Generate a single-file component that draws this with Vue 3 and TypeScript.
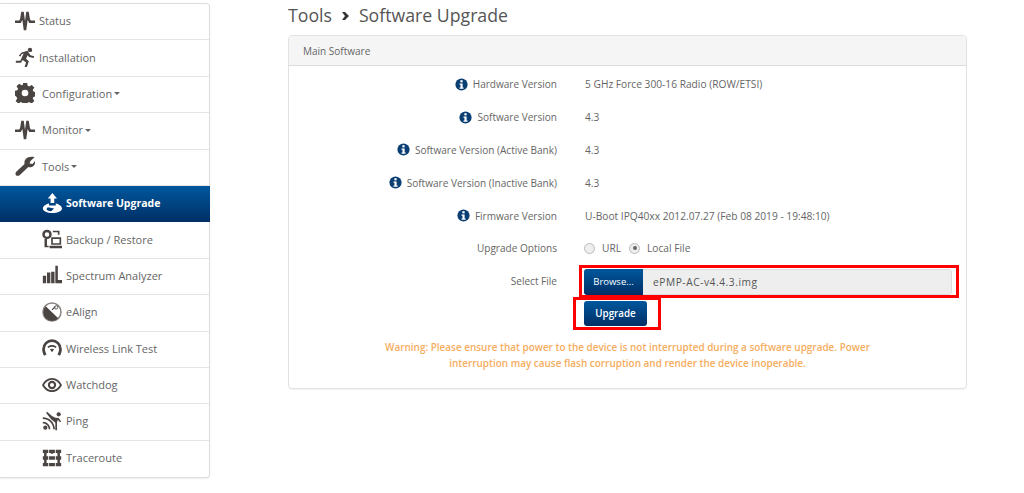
<script setup lang="ts">
interface NavItem { label: string; icon: string; caret?: boolean; sub?: boolean; active?: boolean; wide?: boolean }
const nav: NavItem[] = [
  { label: 'Status', icon: 'pulse' },
  { label: 'Installation', icon: 'run' },
  { label: 'Configuration', icon: 'gear', caret: true, wide: true },
  { label: 'Monitor', icon: 'pulse', caret: true, wide: true },
  { label: 'Tools', icon: 'wrench', caret: true, wide: true },
  { label: 'Software Upgrade', icon: 'upgrade', sub: true, active: true },
  { label: 'Backup / Restore', icon: 'backup', sub: true },
  { label: 'Spectrum Analyzer', icon: 'bars', sub: true },
  { label: 'eAlign', icon: 'dish', sub: true },
  { label: 'Wireless Link Test', icon: 'gauge', sub: true },
  { label: 'Watchdog', icon: 'eye', sub: true },
  { label: 'Ping', icon: 'ping', sub: true },
  { label: 'Traceroute', icon: 'trace', sub: true },
]
const rows = [
  { label: 'Hardware Version', value: '5 GHz Force 300-16 Radio (ROW/ETSI)' },
  { label: 'Software Version', value: '4.3' },
  { label: 'Software Version (Active Bank)', value: '4.3' },
  { label: 'Software Version (Inactive Bank)', value: '4.3' },
  { label: 'Firmware Version', value: 'U-Boot IPQ40xx 2012.07.27 (Feb 08 2019 - 19:48:10)' },
]
</script>

<template>
  <div class="page">
    <nav class="side">
      <a v-for="item in nav" :key="item.label" class="item" :class="{ sub: item.sub, active: item.active, wide: item.wide }">
        <svg class="ico" viewBox="0 0 24 24" aria-hidden="true">
          <path v-if="item.icon === 'pulse'" fill="none" stroke="#4a4442" stroke-width="3" d="M0 13h6l1.500-3 1.500-9 3 22 3-22 1.500 9 1.500 3h6" />
          <g v-else-if="item.icon === 'run'">
            <circle cx="18" cy="3.500" r="2.600" />
            <path d="M8 6.500l7-2 3.500 5.500 4.500 1-.6 2.300-5.600-1.300-1.600-2-2 4.200 3.400 3-2.700 8-2.500-.9 1.900-5.600-4.100-3-2 3.300H1v-2.400h5.400l4-8.800-2.200.6-1.700 3-2-1z" />
          </g>
          <path v-else-if="item.icon === 'gear'" fill-rule="evenodd" d="M9.500 0h5l.7 3.400 1.800.8 3-1.900 3.200 3.200-1.900 3 .8 1.800 3.400.7v5l-3.400.7-.8 1.800 1.900 3-3.200 3.200-3-1.900-1.800.8-.7 3.400h-5l-.7-3.400-1.800-.8-3 1.900-3.200-3.200 1.900-3-.8-1.800L-.5 14.500v-5l3.400-.7.8-1.800-1.900-3 3.200-3.200 3 1.900 1.800-.8zM12 8a4 4 0 1 0 0 8 4 4 0 0 0 0-8z" />
          <path v-else-if="item.icon === 'wrench'" d="M23.500 1.500l-5 4.500-1 3 3.500.5 3-3.500c.6 3-.8 6-4 7.300-1.500.5-3 .4-4-.2L5.500 23c-1.500 1.300-3.700 1-4.500-.3-.8-1.300-.4-3 .8-4l9.700-9.200c-.5-2-.2-4.200 1.500-6C14.800 1.300 20 .3 23.500 1.500z" />
          <g v-else-if="item.icon === 'upgrade'">
            <path d="M12.500 0l5.500 6.500h-3.300V12h-4.400V6.500H7z" />
            <path fill-rule="evenodd" d="M8.500 12.500C4 13.500 1 16 1 18.500c0 3 5 5.500 11.500 5.500S24 21.500 24 18.500c0-2.500-3-5-7.500-6V15h-8zM7 17l7.500 1.500L11 22c-3.500-.2-5.500-1.500-5.500-3z" />
          </g>
          <g v-else-if="item.icon === 'backup'">
            <circle cx="6" cy="6.500" r="4.200" fill="none" stroke="#4a4442" stroke-width="3" />
            <path d="M13 2h8v5h-2V4h-6zM3 12h3v8h2v2H3z" />
            <path fill-rule="evenodd" d="M11 10h12v9H11zM13 12v5h8v-5zM9 20h15v3H9z" />
          </g>
          <path v-else-if="item.icon === 'bars'" d="M1 13h4v9H1zM6 9h4v13H6zM11 8h4v14h-4zM16 1h3v17h5v4h-8z" />
          <g v-else-if="item.icon === 'dish'">
            <circle cx="12" cy="12" r="10.800" fill="none" stroke="#8a8482" stroke-width="1.800" />
            <path d="M4.500 5l15 14.500A10 10 0 0 1 4.500 5zM11.500 9l4-4 1 1-4 4z" />
            <circle cx="17" cy="6.500" r="2" fill="none" stroke="#4a4442" />
          </g>
          <g v-else-if="item.icon === 'gauge'">
            <path d="M12 1.500a11.800 11.800 0 0 1 11.800 11.800c0 2.700-.6 5.400-2.200 8l-3-1.500c1.100-2.200 1.900-4.300 1.900-6.500a8.500 8.500 0 0 0-17 0c0 2.200.8 4.300 1.900 6.500l-3 1.500C.8 18.700.2 16 .2 13.300A11.800 11.800 0 0 1 12 1.500z" />
            <path d="M6.500 10.500c3-2.800 8-2.800 11 0l-1.300 1.400c-2.300-2-6-2-8.300 0zM9.500 13.500c1.500-1 3.500-1 5 0L12 17z" />
          </g>
          <g v-else-if="item.icon === 'eye'">
            <path fill-rule="evenodd" d="M12 3.500c5.500 0 9.700 3.700 12 8.500-2.300 4.800-6.500 8.500-12 8.500S2.300 16.800 0 12c2.300-4.800 6.500-8.500 12-8.500zm0 2.200C8 5.700 4.500 8.400 2.500 12c2 3.600 5.500 6.300 9.500 6.300s7.500-2.700 9.500-6.300C19.500 8.400 16 5.700 12 5.700z" />
            <path fill-rule="evenodd" d="M12 7a5 5 0 1 1 0 10 5 5 0 0 1 0-10zm0 2.500a2.500 2.500 0 1 0 0 5 2.500 2.500 0 0 0 0-5z" />
          </g>
          <g v-else-if="item.icon === 'ping'">
            <circle cx="4" cy="20" r="2.500" />
            <path d="M1 13c5 0 9 4 9 9H8c0-4-3-7-7-7zM1 7.500c8 0 14.500 6.500 14.500 14.500h-2C13.500 15 8 9.500 1 9.500z" />
            <circle cx="20" cy="4" r="2.500" />
            <path d="M6 1l6 5 4 2 4 .5 3 4-1.500 1-2.500-3-1 3v9.500h-2V14l-5-4-6-7.500z" />
          </g>
          <path v-else d="M1 2h6.500v4H1zM8.500 2h7v4h-7zM16.500 2H23v4h-6.500zM1 10h6.500v4H1zM8.500 10h7v4h-7zM16.500 10H23v4h-6.500zM1 18h6.500v4H1zM8.500 18h7v4h-7zM16.500 18H23v4h-6.500zM2.500 5h3v14h-3zM18.500 5h3v14h-3zM10.500 5h3v2h-3z" />
        </svg>
        <span class="lbl">{{ item.label }}</span>
        <span v-if="item.caret" class="caret"></span>
      </a>
    </nav>

    <main class="main">
      <h1 class="crumb">
        <span>Tools</span>
        <svg class="chev" viewBox="0 0 10 10" aria-hidden="true"><path d="M2 1h3l4 4-4 4H2l3-4z" /></svg>
        <span>Software Upgrade</span>
      </h1>
      <section class="panel">
        <header class="head">Main Software</header>
        <div class="body">
          <div v-for="r in rows" :key="r.label" class="row">
            <div class="key">
              <svg class="info" viewBox="0 0 16 16" aria-hidden="true">
                <circle cx="8" cy="8" r="6.500" fill="#0a3f73" />
                <rect x="6.800" y="3.400" width="2.400" height="2.300" fill="#fff" />
                <path d="M5.900 6.800h3.300v4.300h1v1.400H5.900v-1.400h1V8.200h-1z" fill="#fff" />
              </svg>
              <span>{{ r.label }}</span>
            </div>
            <div class="val">{{ r.value }}</div>
          </div>
          <div class="row">
            <div class="key">Upgrade Options</div>
            <div class="val radios">
              <span class="radio"></span><span class="rl">URL</span>
              <span class="radio on"></span><span>Local File</span>
            </div>
          </div>
          <div class="row">
            <div class="key">Select File</div>
            <div class="val file">
              <span class="btn browse">Browse...</span>
              <span class="fname">ePMP-AC-v4.4.3.img</span>
              <span class="mark mark-file"></span>
            </div>
          </div>
          <div class="row up">
            <div class="key"></div>
            <div class="val upcell">
              <span class="btn upgrade">Upgrade</span>
              <span class="mark mark-up"></span>
            </div>
          </div>
          <p class="warn">Warning: Please ensure that power to the device is not interrupted during a software upgrade. Power interruption may cause flash corruption and render the device inoperable.</p>
        </div>
      </section>
    </main>
  </div>
</template>

<style>
html, body { margin: 0; background: #fff; }
</style>

<style scoped>
.page {
  width: 1024px;
  height: 493px;
  overflow: hidden;
  display: flex;
  align-items: flex-start;
  font-family: "Open Sans", sans-serif;
  color: #5f5f5f;
}
.side {
  flex: none;
  width: 210px;
  margin: 3px 78px 0 0;
  box-sizing: border-box;
  border: 1px solid #ddd;
  border-left: 0;
  border-radius: 0 4px 4px 0;
  box-shadow: 0 1px 2px rgba(0, 0, 0, .08);
  display: grid;
  grid-auto-rows: 36.400px;
}
.item {
  display: flex;
  align-items: center;
  box-sizing: border-box;
  padding: 0 0 2px 15px;
  border-bottom: 1px solid #e4e4e4;
  font-size: 11px;
  color: #666;
}
.item:last-child { border-bottom: 0; }
.item .ico { flex: none; width: 20px; height: 20px; margin-right: 4px; fill: #4a4442; }
.item.wide .ico { margin-right: 7px; }
.item.sub { padding-left: 42px; }
.item.active {
  background: linear-gradient(#00579d, #002f66);
  color: #fff;
  font-weight: 700;
  font-size: 10.500px;
  border-bottom: 0;
  margin-right: -1px;
}
.item.active .ico { fill: #fff; }
.caret {
  margin: 1px 0 0 2px;
  border-top: 3px solid #666;
  border-left: 3px solid transparent;
  border-right: 3px solid transparent;
}
.main { flex: none; width: 679px; }
.crumb {
  display: flex;
  align-items: center;
  box-sizing: border-box;
  height: 35px;
  padding-bottom: 5px;
  margin: 0;
  font-size: 17.700px;
  font-weight: 400;
  color: #555;
}
.chev { width: 10px; height: 10px; margin: 2px 9px 0 8px; fill: #333; }
.panel {
  box-sizing: border-box;
  height: 354px;
  border: 1px solid #e2e2e2;
  border-radius: 4px;
  box-shadow: 0 1px 1px rgba(0, 0, 0, .05);
}
.head {
  height: 29px;
  padding: 0 14px;
  display: flex;
  align-items: center;
  background: #f5f5f5;
  border-bottom: 1px solid #ddd;
  border-radius: 3px 3px 0 0;
  font-size: 10px;
  color: #666;
}
.body { padding-top: 2px; }
.row {
  display: flex;
  align-items: center;
  height: 32.800px;
  font-size: 10.200px;
}
.key {
  width: 268px;
  flex: none;
  display: flex;
  justify-content: flex-end;
  align-items: center;
  font-size: 10.050px;
  color: #666;
}
.info { width: 15px; height: 15px; margin-right: 4px; }
.val { margin-left: 28px; color: #666; display: flex; align-items: center; position: relative; }
.radio {
  box-sizing: border-box;
  width: 11px;
  height: 11px;
  border-radius: 50%;
  border: 1px solid #bbb;
  background: #eee;
  margin-right: 7px;
  position: relative;
}
.radio.on::after {
  content: "";
  position: absolute;
  left: 2.500px;
  top: 2.500px;
  width: 4px;
  height: 4px;
  border-radius: 50%;
  background: #666;
}
.radios { margin-left: 27px; }
.rl { margin-right: 8px; }
.file {
  width: 368px;
  height: 26px;
  box-sizing: border-box;
  margin: 1px 0 0 27px;
  background: #eee;
  border: 1px solid #ddd;
  border-radius: 3px;
  color: #555;
}
.btn {
  display: flex;
  align-items: center;
  justify-content: center;
  background: linear-gradient(#00579d, #002f66);
  color: #fff;
  font-weight: 400;
  border-radius: 3px;
}
.browse {
  flex: none;
  width: 59px;
  height: 26px;
  margin: -1px 0 -1px -1px;
  border-radius: 3px 0 0 3px;
  font-size: 9.500px;
}
.fname { margin-left: 10px; letter-spacing: .55px; }
.upcell { margin-left: 27px; }
.upgrade { width: 63px; height: 25px; font-weight: 600; font-size: 9.800px; }
.mark {
  position: absolute;
  border: 3px solid #f00;
  box-sizing: border-box;
  pointer-events: none;
}
.mark-file { left: -6px; top: -5px; width: 380px; height: 33px; }
.mark-up { left: -11px; top: -4px; width: 88px; height: 33px; }
.warn {
  width: 520px;
  margin: 9px auto 0;
  text-align: center;
  font-size: 9.950px;
  line-height: 16px;
  font-weight: 600;
  color: #f5ad5e;
}
</style>
